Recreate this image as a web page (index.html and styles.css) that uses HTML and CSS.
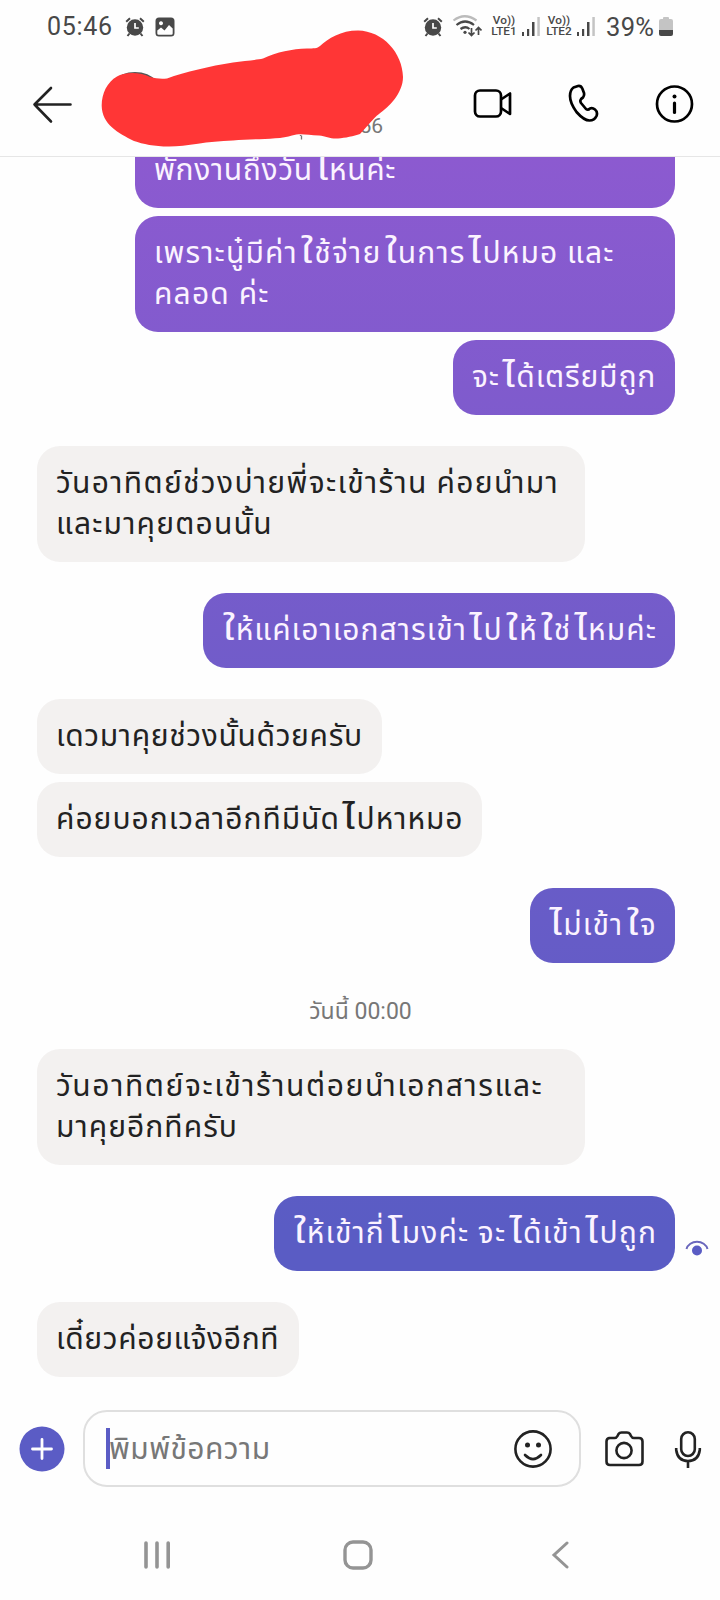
FILE: index.html
```html
<!DOCTYPE html>
<html lang="th">
<head>
<meta charset="utf-8">
<title>Chat</title>
<link rel="stylesheet" href="styles.css">
</head>
<body>
<div class="phone">
<div class="status">
  <span class="clock">05:46</span>
  <svg class="s-alarm1" width="20" height="20" viewBox="0 0 20 20"><use href="#alarm"/></svg>
  <svg class="s-pic" width="20" height="20" viewBox="0 0 20 20"><path fill="#484848" fill-rule="evenodd" d="M4 .5h12A3.500 3.500 0 0 1 19.500 4v12a3.500 3.500 0 0 1-3.500 3.500H4A3.500 3.500 0 0 1 .5 16V4A3.500 3.500 0 0 1 4 .5zM2.300 13.500V16.500a1.300 1.300 0 0 0 1.300 1.300h12.800a1.300 1.300 0 0 0 1.300-1.300V11.500L14 8 9.500 13.500 6 10.500zM6 4.300a2 2 0 1 0 .01 0z"/></svg>
  <svg class="s-alarm2" width="20" height="20" viewBox="0 0 20 20"><g id="alarm"><circle cx="10" cy="10.500" r="8.200" fill="#484848"/><path d="M1.200 4.800 5 1.300M18.800 4.800 15 1.300M4.500 16.500 2.500 19M15.500 16.500l2 2.500" stroke="#484848" stroke-width="2" fill="none"/><path d="M10 6v5h3.800" stroke="#fff" stroke-width="1.700" fill="none"/></g></svg>
  <svg class="s-wifi" width="30" height="24" viewBox="452 14 30 24" fill="none" stroke="#484848" stroke-width="2.200"><path stroke="#bbb" d="M453.500 20.500q11-8.500 23 0"/><path d="M456.500 25q8.500-7 17.500 0M460.500 29q5-3.500 9 0"/><circle cx="465" cy="32.300" r="1.600" fill="#484848" stroke="none"/><path stroke-width="1.700" d="M471.500 28v7.500M468.500 32.500l3 3 3-3M478.500 35v-7.500M475.500 30.500l3-3 3 3"/></svg>
  <span class="lte"><b>Vo))</b><b>LTE1</b></span>
  <svg class="s-sig1" width="18" height="20" viewBox="0 0 18 20"><g id="sig"><path fill="#484848" d="M0 15h2v4H0zM5 12h2.200v7H5zM10 5h2.500v14H10z"/><path fill="#c4c4c4" d="M15.300 0h2.500v19h-2.500z"/></g></svg>
  <span class="lte lte2"><b>Vo))</b><b>LTE2</b></span>
  <svg class="s-sig2" width="18" height="20" viewBox="0 0 18 20"><use href="#sig"/></svg>
  <span class="pct">39%</span>
  <svg class="s-bat" width="14" height="22" viewBox="0 0 14 22"><path fill="#c4c4c4" d="M4 1Q4 0 5 0h4q1 0 1 1V2h2q2 0 2 2v10H0V4q0-2 2-2h2z"/><path fill="#484848" d="M0 13h14V17q0 2-2 2H2q-2 0-2-2z"/></svg>
</div>
<header class="header">
  <svg class="h-back" width="42" height="40" viewBox="31 84 42 40" fill="none" stroke="#222" stroke-width="2.600" stroke-linecap="round" stroke-linejoin="round"><path d="M51 88 34.500 104.500 51 121.500M34.500 104.500h36"/></svg>
  <div class="who"><span class="avatar"></span><span class="active">56</span>
    <svg class="scribble" width="310" height="124" viewBox="98 26 310 124"><path d="M300.500 136v-1M301.500 135.500v4" stroke="#777" stroke-width="1.300"/><path fill="#ff3636" d="M101.700 106C101.500 94 107 82 117 76.500C124 72 140 71.500 150 77C156 78.500 160 79 167 78.500C185 72 210 66 233 62.500C244 61 256 60 263 58.500C277 52 292 49 307 48.500C314 48.500 317 48.500 320 46C328 38.500 341 30.500 358 30.500C383 31 402.500 53 403 77C403 93 389 107 379 114C373 118.500 367 127 360 134C354 136 345 138 338 138.500C330 139 326 136 319 135.500C307 135 300 133 292 135.500C279 140 252 138.500 233 140.500C207 141 187 146.500 169 146.500C154 146.500 143 144 134 141C118 133 102 124 101.700 106z"/></svg>
  </div>
  <svg class="h-video" width="40" height="32" viewBox="472 87 40 32" fill="none" stroke="#000" stroke-width="2.700" stroke-linejoin="round"><rect x="475" y="90.500" width="26" height="26" rx="5"/><path d="M501 99.500 510 93.500v20.500l-9-6"/></svg>
  <svg class="h-call" width="32" height="40" viewBox="567 84 32 40" fill="none" stroke="#000" stroke-width="2.700" stroke-linejoin="round"><path d="M573.500 87.500 578 86Q581 85.500 582.300 88.500L584 93Q584.500 95.500 583 97.500 579 100 581 103L586 109Q588 110.500 590 108.500 592.500 107.500 595 109.500 598 112 596.500 116 594.500 120.500 589.500 120.500 584 120.500 576.500 112 570 103 570 96 570 90 573.500 87.500z"/></svg>
  <svg class="h-info" width="40" height="40" viewBox="654 83.500 40 40" fill="none" stroke="#000" stroke-width="2.700"><circle cx="674.500" cy="103.500" r="17.500"/><path d="M674.500 102.500v9.500" stroke-width="3.200" stroke-linecap="round"/><circle cx="674.500" cy="96" r="2" fill="#000" stroke="none"/></svg>
</header>
<main class="chat">
  <div class="msg me wide"><span style="--ls:.65px">พักงานถึงวัน<i>ไ</i>หนค่ะ</span></div>
  <div class="msg me wide"><span style="--ls:1.16px">เพราะนู๋มีค่า<i>ใ</i>ช้จ่าย<i>ใ</i>นการ<i>ไ</i>ปหมอ และ</span><span style="--ls:1.2px">คลอด ค่ะ</span></div>
  <div class="msg me" style="width:222px"><span style="--ls:.85px">จะ<i>ไ</i>ด้เตรียมืถูก</span></div>
  <div class="msg them turn" style="width:548px"><span style="--ls:1.33px">วันอาทิตย์ช่วงบ่ายพี่จะเข้าร้าน ค่อยนำมา</span><span style="--ls:1.2px">และมาคุยตอนนั้น</span></div>
  <div class="msg me turn" style="width:472px"><span style="--ls:1.04px"><i class="lead">ใ</i>ห้แค่เอาเอกสารเข้า<i>ไ</i>ป<i>ใ</i>ห้<i>ใ</i>ช่<i>ไ</i>หมค่ะ</span></div>
  <div class="msg them turn" style="width:345px"><span style="--ls:.65px">เดวมาคุยช่วงนั้นด้วยครับ</span></div>
  <div class="msg them" style="width:445px"><span style="--ls:.98px">ค่อยบอกเวลาอีกทีมีนัด<i>ไ</i>ปหาหมอ</span></div>
  <div class="msg me turn" style="width:145px"><span style="--ls:1.15px"><i class="lead">ไ</i>ม่เข้า<i>ใ</i>จ</span></div>
  <div class="day">วันนี้ 00:00</div>
  <div class="msg them" style="width:548px"><span style="--ls:1.6px">วันอาทิตย์จะเข้าร้านต่อยนำเอกสารและ</span><span style="--ls:1.05px">มาคุยอีกทีครับ</span></div>
  <div class="msg me turn" style="width:401px"><span style="--ls:1.1px"><i class="lead">ใ</i>ห้เข้ากี่<i class="o">โ</i>มงค่ะ จะ<i>ไ</i>ด้เข้า<i>ไ</i>ปถูก</span>
    <svg class="seen" width="24" height="20" viewBox="685 1239 24 20"><path d="M686.500 1249a10.800 9.500 0 0 1 21 0" fill="none" stroke="#6a67bd" stroke-width="2"/><circle cx="697" cy="1250.500" r="5" fill="#5a5cc4"/></svg></div>
  <div class="msg them turn" style="width:262px"><span style="--ls:.65px">เดี๋ยวค่อยแจ้งอีกที</span></div>
</main>
<div class="composer">
  <svg class="plus" width="46" height="46" viewBox="0 0 46 46"><circle cx="23" cy="23" r="22.500" fill="#5b5cc5"/><path d="M23 13.500v19M13.500 23h19" stroke="#fff" stroke-width="2.800" stroke-linecap="round"/></svg>
  <div class="field"><b class="caret"></b><span class="ph">พิมพ์ข้อความ</span>
    <svg class="smile" width="40" height="40" viewBox="512.500 1429.500 40 40" fill="none" stroke="#222" stroke-width="2.600" stroke-linecap="round"><circle cx="532.500" cy="1449.500" r="17.600"/><path d="M524.500 1455.500q8 8 16 0"/><g fill="#222" stroke="none"><circle cx="527" cy="1445.500" r="2.500"/><circle cx="538" cy="1445.500" r="2.500"/></g></svg></div>
  <svg class="camera" width="40" height="38" viewBox="604.500 1430 40 38" fill="none" stroke="#222" stroke-width="2.600" stroke-linejoin="round"><path d="M609.500 1438H615Q617 1438 618 1436L619 1434Q620 1432.500 622 1432.500H627.500Q629.500 1432.500 630.500 1434L631.500 1436Q632.500 1438 634.500 1438H639.500Q643 1438 643 1441.500V1461.500Q643 1465 639.500 1465H610.500Q607 1465 607 1461.500V1441.500Q607 1438 610.500 1438z"/><circle cx="624.500" cy="1450.500" r="7.600"/></svg>
  <svg class="mic" width="30" height="40" viewBox="673.500 1429 30 40" fill="none" stroke="#222" stroke-width="2.600"><rect x="681.700" y="1432.300" width="13.600" height="23.700" rx="6.800"/><path d="M676.700 1448v2q1.500 11 11.800 11 10.300 0 11.800-11v-2M688.500 1461v7"/></svg>
</div>
<nav class="nav">
  <svg class="n-rec" width="28" height="30" viewBox="0 0 28 30" stroke="#949494" stroke-width="3.600" stroke-linecap="round"><path d="M3 3v24M14 3v24M25.200 3v24"/></svg>
  <svg class="n-home" width="32" height="32" viewBox="0 0 32 32" fill="none" stroke="#949494" stroke-width="3.400"><rect x="3" y="3" width="26" height="26" rx="8"/></svg>
  <svg class="n-back" width="18" height="30" viewBox="0 0 18 30" fill="none" stroke="#949494" stroke-width="3" stroke-linecap="round"><path d="M16 3 3 15l13 12"/></svg>
</nav>
</div>
</body>
</html>
```
FILE: styles.css
```css
* { box-sizing: border-box; }
body { margin: 0; background: #fefefe; font-family: Roboto, "Noto Sans Thai", "Noto Sans", sans-serif; }
svg { display: block; flex: none; }
.phone { width: 720px; height: 1600px; display: flex; flex-direction: column; overflow: hidden; }

.status { display: flex; align-items: flex-start; height: 52px; color: #484848; padding: 17px 0 0 47px; }
.clock, .pct { font-size: 25px; line-height: 20px; white-space: nowrap; }
.clock { width: 78px; letter-spacing: .7px; }
.s-alarm1 { margin-right: 10px; }
.s-pic { margin-right: 248px; }
.s-alarm2 { margin-right: 9px; }
.s-wifi { margin: -3px 8px 0 0; }
.lte { width: 28px; margin-top: -2px; display: flex; flex-direction: column; font-size: 11.800px; line-height: 11px; white-space: nowrap; align-items: center; }
.lte b { font-weight: 500; }
.s-sig1 { margin: 0 5px 0 4px; }
.s-sig2 { margin: 0 11px 0 4px; }
.pct { width: 53px; font-size: 25.500px; letter-spacing: .3px; }

.header { height: 105px; display: flex; border-bottom: 1px solid #e6e6e6; padding-left: 31px; }
.h-back { margin: 32px 25px 0 0; }
.who { position: relative; width: 310px; margin-right: 64px; }
.avatar { position: absolute; left: 5px; top: 19.500px; width: 64px; height: 64px; border-radius: 50%; border: 2px solid #555; }
.active { position: absolute; right: 25px; top: 62px; font-size: 21px; line-height: 24px; color: #777; }
.scribble { position: absolute; left: 0; top: -26px; }
.h-video { margin: 35px 55px 0 0; }
.h-call { margin: 32px 55px 0 0; }
.h-info { margin-top: 31.500px; }

.chat { height: 1220px; flex: none; overflow: hidden; display: flex; flex-direction: column; justify-content: flex-end; padding: 0 45px 0 37px; }
.msg { position: relative; flex: none; margin-top: 8px; padding: 16px 19px 18px; border-radius: 23px; font-size: 30px; line-height: 41px; white-space: nowrap; display: flex; flex-direction: column; align-items: flex-start; }
.msg span { display: block; height: 41px; letter-spacing: var(--ls); }
/* tall leading vowels: wider and higher than the font's own */
.msg i { display: inline-block; font-style: normal; margin-left: 6.500px; transform: scale(1.4, 1.1); transform-origin: 85% 75%; }
.msg i.lead { margin-left: 4px; }
.turn { margin-top: 31px; }
.me { align-self: flex-end; color: #fbf3ff; background: linear-gradient(#8c5ad0 157px, #735cca 630px, #5a5cc4 1230px) fixed; }
.them { color: #222; background: #f3f1f0; }
.wide { width: 540px; }
.day { flex: none; height: 78px; padding-top: 34px; margin-left: 9px; align-self: center; font-size: 23px; line-height: 30px; color: #777; }
.seen { position: absolute; left: calc(100% + 10px); top: 43px; }

.composer { display: flex; margin-top: 33px; height: 77px; padding-left: 18.500px; align-items: center; flex: none; }
.plus { margin-right: 18.500px; }
.field { width: 498px; height: 77px; border: 2px solid #dfdfdf; border-radius: 24px; display: flex; align-items: center; padding-left: 21px; font-size: 30px; color: #777; }
.caret { width: 4px; height: 41px; margin-right: -1px; background: #5b5cc5; }
.ph { flex: 1; line-height: 41px; white-space: nowrap; letter-spacing: .45px; }
.smile { margin-right: 26.500px; }
.camera { margin: 0 29px 0 23px; }

.nav { display: flex; margin-top: 51px; padding-left: 143px; align-items: center; height: 34px; }
.n-rec { margin-right: 171px; }
.n-home { margin-right: 177px; }
```
